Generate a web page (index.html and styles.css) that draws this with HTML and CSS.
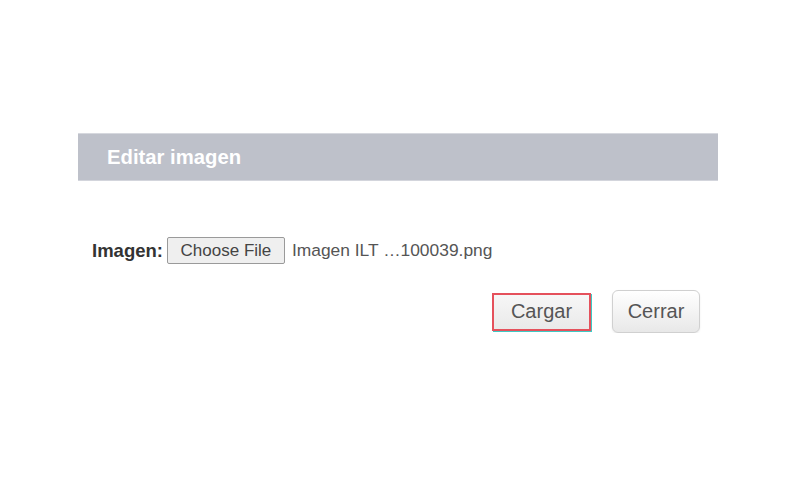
FILE: index.html
```html
<!DOCTYPE html>
<html lang="es">
<head>
<meta charset="utf-8">
<title>Editar imagen</title>
<link rel="stylesheet" href="styles.css">
</head>
<body>
<div class="page">
  <div class="dialog">
    <div class="header">Editar imagen</div>
    <div class="content">
      <div class="field">
        <span class="label">Imagen:</span>
        <span class="file-btn">Choose File</span>
        <span class="file-name">Imagen ILT …100039.png</span>
      </div>
      <div class="actions">
        <button class="btn btn-focus">Cargar</button>
        <button class="btn btn-round">Cerrar</button>
      </div>
    </div>
  </div>
</div>
</body>
</html>
```

FILE: styles.css
```css
html, body {
  margin: 0;
  padding: 0;
  background: #ffffff;
}
body {
  font-family: "Liberation Sans", Arial, sans-serif;
}
.page {
  padding: 133px 0 0 78px;
}
.dialog {
  width: 640px;
}
.header {
  height: 48px;
  box-sizing: border-box;
  background: #bec1ca;
  border-top: 1px solid #d6d8de;
  border-bottom: 1px solid #d3d5dc;
  color: #ffffff;
  font-weight: bold;
  font-size: 20.3px;
  line-height: 46px;
  padding-left: 29px;
}
.content {
  padding: 56px 18px 0 14px;
}
.field {
  display: flex;
  align-items: center;
  height: 27px;
}
.label {
  font-weight: bold;
  font-size: 18.5px;
  color: #333333;
  margin-right: 4px;
}
.file-btn {
  box-sizing: border-box;
  height: 27px;
  width: 118px;
  border: 1px solid #9a9a9a;
  border-radius: 2px;
  background: #efefef;
  font-size: 17px;
  color: #444444;
  display: flex;
  align-items: center;
  justify-content: center;
}
.file-name {
  font-size: 17.4px;
  color: #555555;
  margin-left: 7px;
}
.actions {
  display: flex;
  justify-content: flex-end;
  align-items: center;
  gap: 21px;
  margin-top: 26px;
}
.btn {
  font-family: "Liberation Sans", Arial, sans-serif;
  font-size: 20px;
  color: #555555;
  box-sizing: border-box;
  padding: 0;
  cursor: pointer;
}
.btn-focus {
  width: 99px;
  height: 38px;
  border: 2px solid #e5515c;
  background: linear-gradient(#f7f7f7, #e9e9e9);
  box-shadow: 1px 1px 0 #3fc9c4;
}
.btn-round {
  width: 88px;
  height: 43px;
  border: 1px solid #d0d0d0;
  border-radius: 6px;
  background: linear-gradient(#ffffff, #e8e8e8);
  box-shadow: 0 1px 2px rgba(0, 0, 0, 0.08);
}
```
